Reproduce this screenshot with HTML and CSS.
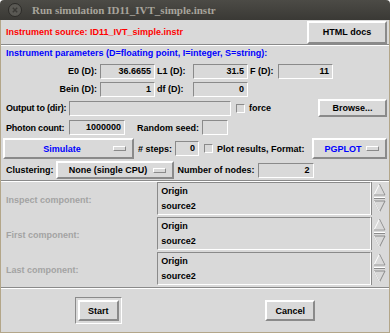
FILE: index.html
```html
<!DOCTYPE html>
<html lang="en">
<head>
    <meta charset="UTF-8">
    <title>Run simulation ID11_IVT_simple.instr</title>
    <link rel="stylesheet" href="styles.css">
</head>
<body>
    <div class="window">
        <div class="titlebar">
            <span class="close"><svg width="14" height="14" viewBox="0 0 14 14"><circle cx="7" cy="7" r="6.5" fill="#5a5954" stroke="#2c2b28"/><path d="M4.8 4.8 L9.2 9.2 M9.2 4.8 L4.8 9.2" stroke="#3a3935" stroke-width="1.4"/></svg></span>
            <span class="title">Run simulation ID11_IVT_simple.instr</span>
        </div>
        <div class="content">
            <div class="row top-row">
                <span class="source">Instrument source: ID11_IVT_simple.instr</span>
                <button class="btn docs">HTML docs</button>
            </div>
            <div class="sep"></div>
            <div class="params-title">Instrument parameters (D=floating point, I=integer, S=string):</div>
            <div class="params">
                <div class="row prow">
                    <label class="plabel first">E0 (D):</label>
                    <span class="entry pentry">36.6655</span>
                    <label class="plabel second">L1 (D):</label>
                    <span class="entry pentry">31.5</span>
                    <label class="plabel third">F (D):</label>
                    <span class="entry pentry">11</span>
                </div>
                <div class="row prow">
                    <label class="plabel first">Bein (D):</label>
                    <span class="entry pentry">1</span>
                    <label class="plabel second">df (D):</label>
                    <span class="entry pentry">0</span>
                </div>
            </div>
            <div class="row out-row">
                <label class="wide-label">Output to (dir):</label>
                <span class="entry out-entry"></span>
                <span class="check"></span>
                <label>force</label>
                <button class="btn browse">Browse...</button>
            </div>
            <div class="row count-row">
                <label class="wide-label">Photon count:</label>
                <span class="entry count-entry">1000000</span>
                <label class="seed-label">Random seed:</label>
                <span class="entry seed-entry"></span>
            </div>
            <div class="row sim-row">
                <button class="menubtn simulate"><span>Simulate</span><i class="ind"></i></button>
                <label># steps:</label>
                <span class="entry stops-entry">0</span>
                <span class="check"></span>
                <label>Plot results, Format:</label>
                <button class="menubtn format"><span>PGPLOT</span><i class="ind"></i></button>
            </div>
            <div class="row cluster-row">
                <label>Clustering:</label>
                <button class="menubtn cluster"><span>None (single CPU)</span><i class="ind"></i></button>
                <label>Number of nodes:</label>
                <span class="entry nodes-entry">2</span>
            </div>
            <div class="sep"></div>
            <div class="comp">
                <label class="dim">Inspect component:</label>
                <div class="listbox"><div>Origin</div><div>source2</div></div>
                <div class="scroll"><svg width="15" height="32" viewBox="0 0 15 32"><path d="M7.5 2 L13 13 L2 13 Z" fill="none" stroke="#fff"/><path d="M7.5 2 L13 13 L2 13" fill="none" stroke="#8a8a8a"/><path d="M2 15.5 H13" stroke="#fff"/><path d="M2 16.5 H13" stroke="#8a8a8a"/><path d="M2 19 L13 19 L7.5 30 Z" fill="none" stroke="#8a8a8a"/><path d="M2 19 L7.5 30" stroke="#fff"/></svg></div>
            </div>
            <div class="comp">
                <label class="dim">First component:</label>
                <div class="listbox"><div>Origin</div><div>source2</div></div>
                <div class="scroll"><svg width="15" height="32" viewBox="0 0 15 32"><path d="M7.5 2 L13 13 L2 13 Z" fill="none" stroke="#fff"/><path d="M7.5 2 L13 13 L2 13" fill="none" stroke="#8a8a8a"/><path d="M2 15.5 H13" stroke="#fff"/><path d="M2 16.5 H13" stroke="#8a8a8a"/><path d="M2 19 L13 19 L7.5 30 Z" fill="none" stroke="#8a8a8a"/><path d="M2 19 L7.5 30" stroke="#fff"/></svg></div>
            </div>
            <div class="comp">
                <label class="dim">Last component:</label>
                <div class="listbox"><div>Origin</div><div>source2</div></div>
                <div class="scroll"><svg width="15" height="32" viewBox="0 0 15 32"><path d="M7.5 2 L13 13 L2 13 Z" fill="none" stroke="#fff"/><path d="M7.5 2 L13 13 L2 13" fill="none" stroke="#8a8a8a"/><path d="M2 15.5 H13" stroke="#fff"/><path d="M2 16.5 H13" stroke="#8a8a8a"/><path d="M2 19 L13 19 L7.5 30 Z" fill="none" stroke="#8a8a8a"/><path d="M2 19 L7.5 30" stroke="#fff"/></svg></div>
            </div>
            <div class="sep"></div>
            <div class="actions">
                <div class="default-ring"><button class="btn action start">Start</button></div>
                <button class="btn action cancel">Cancel</button>
            </div>
        </div>
    </div>
</body>
</html>
```

FILE: styles.css
```css
body {
    margin: 0;
    background-color: #ffffff;
    font-family: "Liberation Sans", Arial, sans-serif;
    font-weight: bold;
    font-size: 9px;
}
.window {
    width: 390px;
    height: 333px;
    display: flex;
    flex-direction: column;
}
.titlebar {
    height: 20px;
    background: linear-gradient(#4c4b46, #3a3935);
    display: flex;
    align-items: center;
    padding-left: 8px;
    border-radius: 4px 4px 0 0;
}
.close {
    display: flex;
    width: 14px;
    height: 14px;
}
.title {
    font-family: "Liberation Serif", serif;
    font-size: 11px;
    color: #a8a59c;
    margin-left: 10px;
}
.content {
    flex: 1;
    background-color: #d9d9d9;
    border: 1px solid #b3a689;
    border-top: none;
    padding: 0 2px 0 2px;
    display: flex;
    flex-direction: column;
}
.row {
    display: flex;
    align-items: center;
}
.row > * {
    flex-shrink: 0;
}
label {
    color: #000000;
    white-space: nowrap;
}
.btn {
    font-family: inherit;
    font-weight: bold;
    font-size: 9px;
    color: #000000;
    background-color: #d9d9d9;
    border: 2px solid;
    border-color: #ffffff #8a8a8a #8a8a8a #ffffff;
    padding: 0;
}
.entry {
    display: block;
    height: 15px;
    line-height: 13px;
    box-sizing: border-box;
    border: 1px solid;
    border-color: #8a8a8a #ffffff #ffffff #8a8a8a;
    background-color: #d9d9d9;
    text-align: right;
    padding-right: 3px;
    color: #000000;
}
.check {
    display: block;
    width: 7px;
    height: 7px;
    border: 1px solid;
    border-color: #8a8a8a #ffffff #ffffff #8a8a8a;
    margin: 0 4px 0 5px;
}
.sep {
    height: 0;
    border-top: 1px solid #8a8a8a;
    border-bottom: 1px solid #ffffff;
    margin: 0 -2px;
}
.top-row {
    height: 24px;
    justify-content: space-between;
    padding-left: 3px;
}
.source {
    color: #ff0000;
}
.docs {
    width: 80px;
    height: 23px;
}
.params-title {
    color: #0000ff;
    padding: 2px 0 0 3px;
    height: 14px;
}
.prow {
    height: 18px;
}
.plabel {
    box-sizing: border-box;
    padding-left: 2px;
}
.plabel.first {
    width: 97px;
    text-align: right;
    padding: 0 3px 0 0;
}
.plabel.second {
    width: 38px;
}
.plabel.third {
    width: 30px;
}
.pentry {
    width: 55px;
}
.out-row {
    height: 20px;
    padding-left: 3px;
}
.wide-label {
    width: 63px;
    letter-spacing: -0.2px;
}
.out-entry {
    width: 162px;
}
.browse {
    width: 69px;
    height: 18px;
    margin-left: auto;
}
.count-row {
    height: 19px;
    padding-left: 3px;
}
.count-entry {
    width: 56px;
}
.seed-label {
    margin: 0 3px 0 12px;
}
.seed-entry {
    width: 26px;
}
.sim-row {
    height: 23px;
}
.menubtn {
    display: flex;
    align-items: center;
    font-family: inherit;
    font-weight: bold;
    font-size: 9px;
    background-color: #d9d9d9;
    border: 2px solid;
    border-color: #ffffff #8a8a8a #8a8a8a #ffffff;
    padding: 0 6px;
    height: 21px;
}
.menubtn span {
    flex: 1;
    text-align: center;
}
.ind {
    display: block;
    width: 11px;
    height: 3px;
    border: 1px solid;
    border-color: #ffffff #8a8a8a #8a8a8a #ffffff;
}
.simulate {
    width: 131px;
    color: #0000ff;
    margin-right: 4px;
}
.stops-entry {
    width: 24px;
    margin-left: 3px;
}
.format {
    width: 75px;
    color: #0000ff;
    margin-left: auto;
}
.cluster-row {
    height: 20px;
    padding-left: 3px;
}
.cluster {
    width: 118px;
    height: 18px;
    color: #000000;
    margin: 0 4px 0 2px;
}
.nodes-entry {
    width: 56px;
    margin-left: 3px;
}
.comp {
    display: flex;
    align-items: center;
    height: 35px;
    padding-left: 3px;
}
.comp label {
    width: 152px;
}
.dim {
    color: #a3a3a3 !important;
}
.listbox {
    width: 215px;
    height: 33px;
    box-sizing: border-box;
    border: 1px solid;
    border-color: #8a8a8a #ffffff #ffffff #8a8a8a;
    padding: 1px 3px;
    line-height: 15px;
    align-self: flex-start;
}
.scroll {
    width: 15px;
    height: 33px;
    align-self: flex-start;
    border-left: 1px solid #8a8a8a;
}
.actions {
    flex: 1;
    display: flex;
    align-items: center;
    justify-content: space-around;
}
.default-ring {
    border: 1px solid;
    border-color: #8a8a8a #ffffff #ffffff #8a8a8a;
    padding: 2px;
}
.action {
    height: 21px;
}
.start {
    width: 41px;
}
.cancel {
    width: 50px;
}
```
